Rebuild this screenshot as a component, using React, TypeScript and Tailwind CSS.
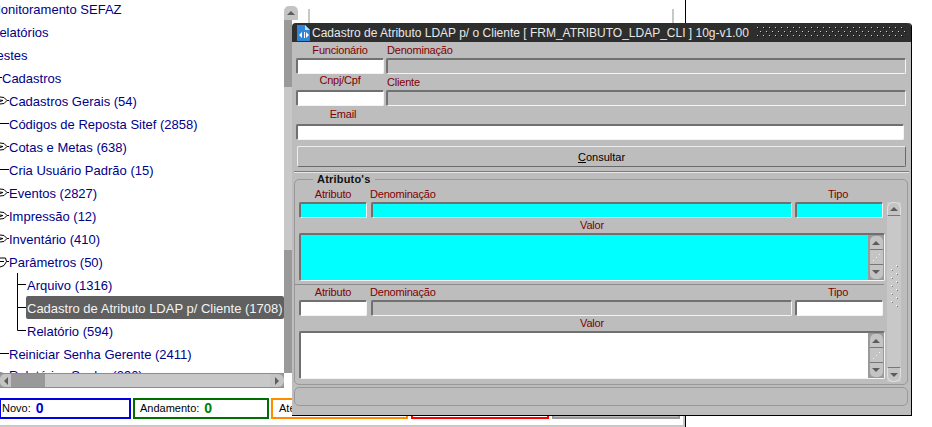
const treeRows = [
  { label: "Monitoramento SEFAZ", level: 0, mark: "none" },
  { label: "Relatórios", level: 0, mark: "none" },
  { label: "Testes", level: 0, mark: "none" },
  { label: "Cadastros", level: 1, mark: "dash" },
  { label: "Cadastros Gerais (54)", level: 2, mark: "closed" },
  { label: "Códigos de Reposta Sitef (2858)", level: 2, mark: "leaf" },
  { label: "Cotas e Metas (638)", level: 2, mark: "closed" },
  { label: "Cria Usuário Padrão (15)", level: 2, mark: "leaf" },
  { label: "Eventos (2827)", level: 2, mark: "closed" },
  { label: "Impressão (12)", level: 2, mark: "closed" },
  { label: "Inventário (410)", level: 2, mark: "closed" },
  { label: "Parâmetros (50)", level: 2, mark: "open" },
  { label: "Arquivo (1316)", level: 3, mark: "tee" },
  { label: "Cadastro de Atributo LDAP p/ Cliente (1708)", level: 3, mark: "tee", selected: true },
  { label: "Relatório (594)", level: 3, mark: "end" },
  { label: "Reiniciar Senha Gerente (2411)", level: 2, mark: "leaf" },
  { label: "Relatórios Senha (290)", level: 2, mark: "closed", last: true },
];

const sunken = "rounded-[2px] border-t-2 border-l-2 border-r border-b border-t-[#707070] border-l-[#707070] border-r-[#f4f4f4] border-b-[#f4f4f4]";
const labelText = "text-[11px] leading-[15px] text-[#800000] tracking-[-0.2px]";

function Marker({ mark }: { mark: string }) {
  if (mark === "none") return null;
  if (mark === "dash") {
    return <div className="w-[2px] h-[1px] bg-black shrink-0" />;
  }
  if (mark === "tee" || mark === "end") {
    return (
      <svg width="9" height="23" className="shrink-0">
        <path d={mark === "tee" ? "M0.5 0V23M0 11.5H9" : "M0.5 0V11.5H9"} stroke="#000" fill="none" />
      </svg>
    );
  }
  return (
    <svg width="9" height="23" className="shrink-0">
      {mark === "leaf" && <path d="M0 11.5H9" stroke="#000" />}
      {mark === "closed" && (
        <path d="M0 8L4 8.5L7 11.5L4 14.5L0 15M7 11.5H9M0 11L3 11.5L0 12.5" stroke="#000" fill="none" />
      )}
      {mark === "open" && (
        <path d="M0 8H5.5L6.5 11.5L4 15.5L0 17M6.5 11.5H9M0 11.5H4" stroke="#000" fill="none" />
      )}
    </svg>
  );
}

function TreeRow({ row }: { row: (typeof treeRows)[number] }) {
  const indent = row.level === 0 ? "-ml-[10px]" : row.level === 3 ? "ml-[17px]" : "ml-0";
  const textPad = row.last ? "pb-[1px]" : row.level === 3 ? "pl-[1px] pt-[2px]" : "pt-[2px]";
  return (
    <div className={`flex h-[23px] items-center whitespace-nowrap ${indent}`}>
      <Marker mark={row.mark} />
      {row.selected ? (
        <span className="flex h-[23px] w-[258px] items-center rounded-[2px] bg-[#606060] pl-[1px] pt-[2px] text-[#f4f4f4]">
          {row.label}
        </span>
      ) : (
        <span className={textPad}>{row.label}</span>
      )}
    </div>
  );
}

function Arrow({ dir }: { dir: "up" | "down" | "left" | "right" }) {
  const points = {
    up: "1,6 9,6 5,2",
    down: "1,2 9,2 5,6",
    left: "6,1 6,9 2,5",
    right: "2,1 2,9 6,5",
  }[dir];
  const size = dir === "up" || dir === "down" ? "w-[10px] h-[8px]" : "w-[8px] h-[10px]";
  const box = dir === "up" || dir === "down" ? "0 0 10 8" : "0 0 8 10";
  return (
    <svg viewBox={box} className={size}>
      <polygon points={points} fill="#5c5c5c" />
    </svg>
  );
}

function ScrollButton({ dir, className }: { dir: "up" | "down" | "left" | "right"; className: string }) {
  return (
    <div className={`flex shrink-0 items-center justify-center bg-[#c4c4c4] ${className}`}>
      <Arrow dir={dir} />
    </div>
  );
}

function Field({ className }: { className: string }) {
  return <div className={`h-[16px] ${sunken} ${className}`} />;
}

function TextScroll() {
  return (
    <div className="flex h-full w-[16px] shrink-0 flex-col items-center bg-[#9a9a9a] py-[1px]">
      <ScrollButton dir="up" className="h-[14px] w-[13px] rounded-t-[5px] border-b border-[#777]" />
      <div className="flex h-[17px] w-[13px] items-center justify-center border-b border-[#777] bg-[#c4c4c4]">
        <svg width="9" height="9">
          <path d="M7 1h1v1H7zM4 4h1v1H4zM1 7h1v1H1z" fill="#f2f2f2" />
        </svg>
      </div>
      <ScrollButton dir="down" className="h-[14px] w-[13px] rounded-b-[5px]" />
    </div>
  );
}

function AttributeRecord({ color }: { color: "cyan" | "white" }) {
  const bg = color === "cyan" ? "bg-[#00ffff]" : "bg-white";
  const other = color === "cyan" ? "bg-[#00ffff]" : "bg-[#bdbdbd]";
  return (
    <div className="w-[586px]">
      <div className={`flex ${labelText}`}>
        <div className="w-[68px] text-center">Atributo</div>
        <div className="ml-[3px] w-[424px]">Denominação</div>
        <div className="w-[88px] text-center">Tipo</div>
      </div>
      <div className="flex">
        <Field className={`w-[68px] ${bg}`} />
        <Field className={`ml-[4px] w-[421px] ${other}`} />
        <Field className={`ml-[3px] w-[88px] ${bg}`} />
      </div>
      <div className={`text-center ${labelText}`}>Valor</div>
      <div className={`flex h-[48px] justify-end ${sunken} ${bg}`}>
        <TextScroll />
      </div>
    </div>
  );
}

function DialogIcon() {
  return (
    <svg width="13" height="16" viewBox="0 0 13 16" className="shrink-0">
      <path d="M0 0H8L13 5V16H0Z" fill="#2f86d6" />
      <path d="M8 0L13 5H8Z" fill="#bcdcf5" />
      <path d="M5 7L2 10L5 13ZM7 7H8V13H7ZM9 7L12 10L9 13Z" fill="#fff" />
    </svg>
  );
}

function StatusBox({ label, color, value, valueColor, className }: { label: string; color: string; value?: string; valueColor?: string; className: string }) {
  return (
    <div className={`flex h-[21px] items-center border-2 ${color} ${className}`}>
      <span className="text-[11px] text-black">{label}</span>
      {value && <span className={`ml-[5px] text-[14px] font-bold ${valueColor}`}>{value}</span>}
    </div>
  );
}

export default function App() {
  return (
    <div className="relative h-[427px] w-[932px] overflow-hidden bg-white font-['Liberation_Sans',Arial,sans-serif]">
      {/* pagina de fundo */}
      <div className="flex h-[427px] w-[686px] flex-col border-r border-black">
        <div className="flex h-[388px]">
          <div className="flex w-[292px] shrink-0 flex-col">
            <div className="flex h-[373px]">
              <div className="h-[373px] w-[284px] overflow-hidden pt-0 text-[13px] text-[#000088]">
                <div className="-mt-[3px]">
                  {treeRows.map((row) => (
                    <TreeRow key={row.label} row={row} />
                  ))}
                </div>
              </div>
              <div className="mt-[6px] flex w-[8px] flex-col">
                <ScrollButton dir="up" className="h-[14px] w-[14px] rounded-t-[5px]" />
                <div className="h-[67px] bg-[#999]" />
                <div className="h-[163px] bg-[#c8c8c8]" />
                <div className="flex-1 bg-[#999]" />
              </div>
            </div>
            <div className="flex h-[15px] w-[284px] border-y border-[#8c8c8c] bg-[#999]">
              <ScrollButton dir="left" className="w-[11px] rounded-l-[5px]" />
              <div className="ml-[34px] w-[225px] bg-[#c8c8c8]" />
              <div className="flex-1" />
              <ScrollButton dir="right" className="w-[14px] rounded-r-[6px]" />
            </div>
          </div>
          <div className="ml-[16px] mt-[9px] h-[14px] w-[366px] border-x-2 border-[#c8c8c8]" />
        </div>
        <div className="mt-[10px] flex gap-[2px] -ml-[1px]">
          <StatusBox label="Novo:" color="border-[#0000e0]" value="0" valueColor="text-[#0000d0]" className="w-[132px] pl-[1px]" />
          <StatusBox label="Andamento:" color="border-[#006f00]" value="0" valueColor="text-[#008000]" className="w-[136px] pl-[5px]" />
          <StatusBox label="Atendimento:" color="border-[#ff8c00]" className="w-[137px] pl-[6px]" />
          <StatusBox label="" color="border-[#ff0000]" className="ml-[1px] w-[138px]" />
          <StatusBox label="" color="border-[#999]" className="ml-[1px] w-[128px] bg-[#bdbdbd]" />
        </div>
        <div className="-mt-[10px] h-[18px] w-[685px] border-r-2 border-b-2 border-[#c8c8c8]" />
      </div>

      {/* janela Oracle Forms */}
      <div className="absolute left-[292px] top-[23px] h-[393px] w-[620px] rounded-t-[4px] border-r border-b border-black bg-[#bdbdbd] text-[#000]">
        <div className="flex h-[19px] items-center rounded-t-[4px] bg-[#2e2e2e] pl-[5px] pr-[5px]">
          <DialogIcon />
          <span className="ml-[2px] whitespace-nowrap text-[12px] text-[#e8e8e8]">
            Cadastro de Atributo LDAP p/ o Cliente [ FRM_ATRIBUTO_LDAP_CLI ] 10g-v1.00
          </span>
          <svg className="ml-auto h-[11px] w-[149px]">
            <defs>
              <pattern id="grip" width="6" height="8" patternUnits="userSpaceOnUse">
                <rect x="0" y="0" width="1" height="1" fill="#cfcfcf" />
                <rect x="3" y="4" width="1" height="1" fill="#cfcfcf" />
                <rect x="1" y="1" width="1" height="1" fill="#111" />
                <rect x="4" y="5" width="1" height="1" fill="#111" />
              </pattern>
            </defs>
            <rect width="149" height="11" fill="url(#grip)" />
          </svg>
        </div>

        <div className="pl-[4px] pr-[5px]">
          <div className={`flex h-[16px] gap-[2px] pt-[1px] ${labelText}`}>
            <div className="w-[88px] text-center">Funcionário</div>
            <div className="pl-[1px]">Denominação</div>
          </div>
          <div className="flex gap-[2px]">
            <Field className="w-[88px] bg-white" />
            <Field className="w-[520px]" />
          </div>
          <div className={`flex h-[16px] gap-[2px] ${labelText}`}>
            <div className="w-[88px] text-center -mt-[1px]">Cnpj/Cpf</div>
            <div className="pl-[1px] pt-[1px]">Cliente</div>
          </div>
          <div className="flex gap-[2px]">
            <Field className="w-[88px] bg-white" />
            <Field className="w-[520px]" />
          </div>
          <div className={`h-[18px] w-[94px] pt-[1px] text-center ${labelText}`}>Email</div>
          <Field className="w-[608px] bg-white" />
          <div className="ml-[1px] mt-[6px] flex h-[21px] w-[609px] items-center justify-center rounded-[2px] border border-t-[#ececec] border-l-[#ececec] border-r-[#6a6a6a] border-b-[#6a6a6a] pt-[2px] text-[11px] text-black">
            <span>
              <span className="underline">C</span>onsultar
            </span>
          </div>
        </div>

        <div className="ml-[2px] mt-[4px] w-[615px] border-t border-b border-t-[#7c7c7c] border-b-[#e6e6e6]" />

        <div className="relative ml-[2px] mt-[6px] flex h-[206px] w-[614px] gap-[2px] rounded-[5px] border border-[#999] pl-[4px] pt-[7px]">
          <span className="absolute -top-[7px] left-[18px] bg-[#bdbdbd] px-[4px] text-[11px] leading-[13px] font-bold tracking-[0.2px] text-[#111]">
            Atributo's
          </span>
          <div>
            <AttributeRecord color="cyan" />
            <div className="-ml-[4px] h-[4px] w-[589px] border-b border-[#8c8c8c]" />
            <AttributeRecord color="white" />
          </div>
          <div className="mt-[15px] flex h-[180px] w-[14px] flex-col bg-[#c8c8c8]">
            <ScrollButton dir="up" className="h-[14px] w-[14px] rounded-t-[6px] border border-b-[#777] border-[#e0e0e0]" />
            <div className="flex flex-1 items-center justify-center pb-[10px]">
              <svg width="9" height="44" viewBox="0 0 9 44">
                <path d="M7 1h1v1H7zM2 5h1v1H2zM7 9h1v1H7zM2 13h1v1H2zM7 17h1v1H7zM2 21h1v1H2zM7 25h1v1H7zM2 29h1v1H2zM7 33h1v1H7zM2 37h1v1H2zM7 41h1v1H7z" fill="#7a7a7a" />
                <path d="M6 0h1v1H6zM1 4h1v1H1zM6 8h1v1H6zM1 12h1v1H1zM6 16h1v1H6zM1 20h1v1H1zM6 24h1v1H6zM1 28h1v1H1zM6 32h1v1H6zM1 36h1v1H1zM6 40h1v1H6z" fill="#ffffff" />
              </svg>
            </div>
            <ScrollButton dir="down" className="h-[15px] w-[14px] rounded-b-[6px] border border-t-[#777] border-[#e0e0e0]" />
          </div>
        </div>

        <div className="ml-[2px] mt-[2px] h-[19px] w-[614px] rounded-[5px] border border-[#999]" />
      </div>
    </div>
  );
}
